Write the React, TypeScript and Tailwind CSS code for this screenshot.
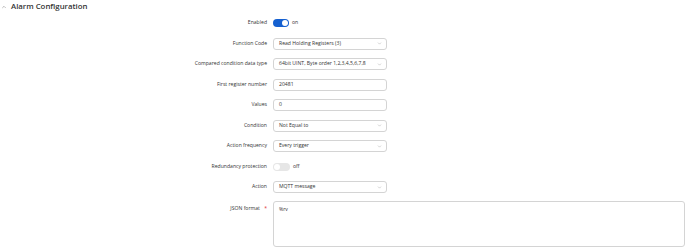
import { ChevronDown, ChevronUp } from "lucide-react";

type Row =
	| { label: string; kind: "toggle"; on: boolean }
	| { label: string; kind: "select"; value: string }
	| { label: string; kind: "input"; value: string };

const rows: Row[] = [
	{ label: "Enabled", kind: "toggle", on: true },
	{ label: "Function Code", kind: "select", value: "Read Holding Registers (3)" },
	{
		label: "Compared condition data type",
		kind: "select",
		value: "64bit UINT, Byte order 1,2,3,4,5,6,7,8",
	},
	{ label: "First register number", kind: "input", value: "20481" },
	{ label: "Values", kind: "input", value: "0" },
	{ label: "Condition", kind: "select", value: "Not Equal to" },
	{ label: "Action frequency", kind: "select", value: "Every trigger" },
	{ label: "Redundancy protection", kind: "toggle", on: false },
	{ label: "Action", kind: "select", value: "MQTT message" },
];

function Toggle({ on }: { on: boolean }) {
	return (
		<div className="flex items-center gap-[3px]">
			<div
				className={
					on
						? "flex h-[8px] w-[16px] items-center justify-end rounded-full bg-[#1560d0] px-[1px]"
						: "flex h-[8px] w-[17px] items-center justify-start rounded-full bg-[#e6e6e6] px-[1px]"
				}
			>
				<div className="h-[6px] w-[6px] rounded-full bg-white" />
			</div>
			<span className="text-[5.1px] text-[#333]">{on ? "on" : "off"}</span>
		</div>
	);
}

function Control({ row }: { row: Row }) {
	if (row.kind === "toggle") return <Toggle on={row.on} />;
	return (
		<div className="flex h-[12.4px] w-[114px] items-center justify-between rounded-[3px] border border-[#d4d4d4] bg-white pl-[5px] pr-[4px] text-[5.1px] text-[#333]">
			<span>{row.value}</span>
			{row.kind === "select" && (
				<ChevronDown size={5} strokeWidth={1.5} className="text-[#777]" />
			)}
		</div>
	);
}

export default function App() {
	return (
		<div
			className="h-[248px] w-[690px] overflow-hidden bg-white"
			style={{ fontFamily: '"Open Sans", "Noto Sans", sans-serif' }}
		>
			<div className="flex h-[12px] items-center gap-[4px] pl-[1px] pt-[1px]">
				<ChevronUp size={6} strokeWidth={1.5} className="text-[#555]" />
				<span className="text-[7.8px] font-semibold text-[#333]">
					Alarm Configuration
				</span>
			</div>

			<div className="mt-[5.1px] flex flex-col gap-[8.1px]">
				{rows.map((row) => (
					<div key={row.label} className="flex h-[12.4px] items-center gap-[6px]">
						<div className="w-[267px] text-right text-[5.1px] text-[#333]">
							{row.label}
						</div>
						<Control row={row} />
					</div>
				))}
				<div className="flex gap-[6px]">
					<div className="w-[267px] pt-[4px] text-right text-[5.1px] text-[#333]">
						JSON format <span className="ml-[3px] text-[#e03030]">*</span>
					</div>
					<div className="h-[46px] w-[412px] rounded-[3px] border border-[#d4d4d4] bg-white px-[5px] pt-[4px] text-[5.1px] text-[#333]">
						%rv
					</div>
				</div>
			</div>
		</div>
	);
}
